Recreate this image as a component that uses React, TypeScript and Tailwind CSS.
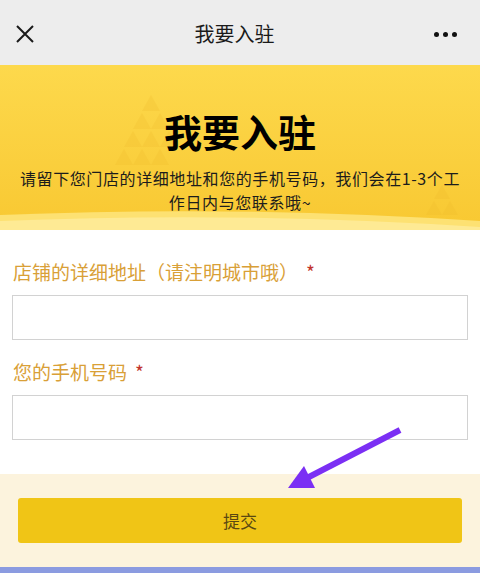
import React from "react";

const cjk = { fontFamily: '"Noto Sans CJK SC", "Noto Sans", sans-serif' };

const Field = ({ label, top }: { label: string; top: string }) => (
  <div className={top}>
    <div className="px-[13px] text-[19px] leading-[26px] text-[#d9a037]">
      {label}
      <span className="ml-[8px] text-[#c2352b]">*</span>
    </div>
    <input
      className="mx-3 mt-[10px] block h-[45px] w-[456px] border border-[#d2d2d2] bg-white outline-none"
      type="text"
    />
  </div>
);

export default function App() {
  return (
    <div className="relative h-[573px] w-[480px] overflow-hidden bg-white" style={cjk}>
      {/* Nav bar */}
      <div className="flex h-[65px] items-center justify-between bg-[#ededed] px-[15px]">
        <svg width="20" height="20" viewBox="0 0 20 20" className="mt-[3px]">
          <path d="M2 2 L18 18 M18 2 L2 18" stroke="#1a1a1a" strokeWidth="2" />
        </svg>
        <div className="pt-[3px] text-[20px] text-[#1a1a1a]">我要入驻</div>
        <div className="mr-[8px] mt-[3px] flex gap-[4px]">
          <span className="h-[5px] w-[5px] rounded-full bg-[#111]" />
          <span className="h-[5px] w-[5px] rounded-full bg-[#111]" />
          <span className="h-[5px] w-[5px] rounded-full bg-[#111]" />
        </div>
      </div>

      {/* Banner */}
      <div className="relative h-[165px] overflow-hidden bg-gradient-to-b from-[#fdd94c] to-[#f8c831]">
        <svg className="absolute left-0 top-0" width="480" height="165" viewBox="0 0 480 165">
          <g fill="#eeb92a" opacity="0.22">
            <polygon points="151,30 142,46 160,46" />
            <polygon points="142,48 133,64 151,64" />
            <polygon points="160,48 151,64 169,64" />
            <polygon points="133,66 124,82 142,82" />
            <polygon points="151,66 142,82 160,82" />
            <polygon points="169,66 160,82 178,82" />
            <polygon points="124,84 115,100 133,100" />
            <polygon points="142,84 133,100 151,100" />
            <polygon points="160,84 151,100 169,100" />
            <polygon points="442,120 434,134 450,134" />
            <polygon points="434,136 426,150 442,150" />
            <polygon points="450,136 442,150 458,150" />
          </g>
          <path d="M0 165 L0 150 Q240 140 480 156 L480 165 Z" fill="#fde172" />
          <path d="M0 165 L0 156 Q240 146 480 162 L480 165 Z" fill="#feea94" />
        </svg>
        <div className="relative pt-[44px] text-center">
          <div className="text-[38px] font-bold leading-[44px] text-black">我要入驻</div>
          <div className="mt-[13px] px-[16px] text-[16px] leading-[24px] tracking-[0.6px] text-[#1c1c1c]">
            请留下您门店的详细地址和您的手机号码，我们会在1-3个工作日内与您联系哦~
          </div>
        </div>
      </div>

      {/* Form */}
      <div className="pb-[34px]">
        <Field label="店铺的详细地址（请注明城市哦）" top="pt-[29px]" />
        <Field label="您的手机号码" top="mt-[19px]" />
      </div>

      {/* Submit */}
      <div className="h-[93px] bg-[#fcf3dd] px-[18px] pt-[24px]">
        <button className="flex h-[45px] w-full items-center justify-center rounded-[3px] bg-[#f0c516] text-[17px] text-[#5a4812]">
          提交
        </button>
      </div>
      <div className="h-[7px] bg-[#8b9be0]" />

      {/* Annotation arrow */}
      <svg className="pointer-events-none absolute left-0 top-0" width="480" height="573">
        <line x1="400" y1="430" x2="305" y2="479" stroke="#7b2ff4" strokeWidth="6" />
        <polygon points="288,488 304,466 315,488" fill="#7b2ff4" />
      </svg>
    </div>
  );
}
